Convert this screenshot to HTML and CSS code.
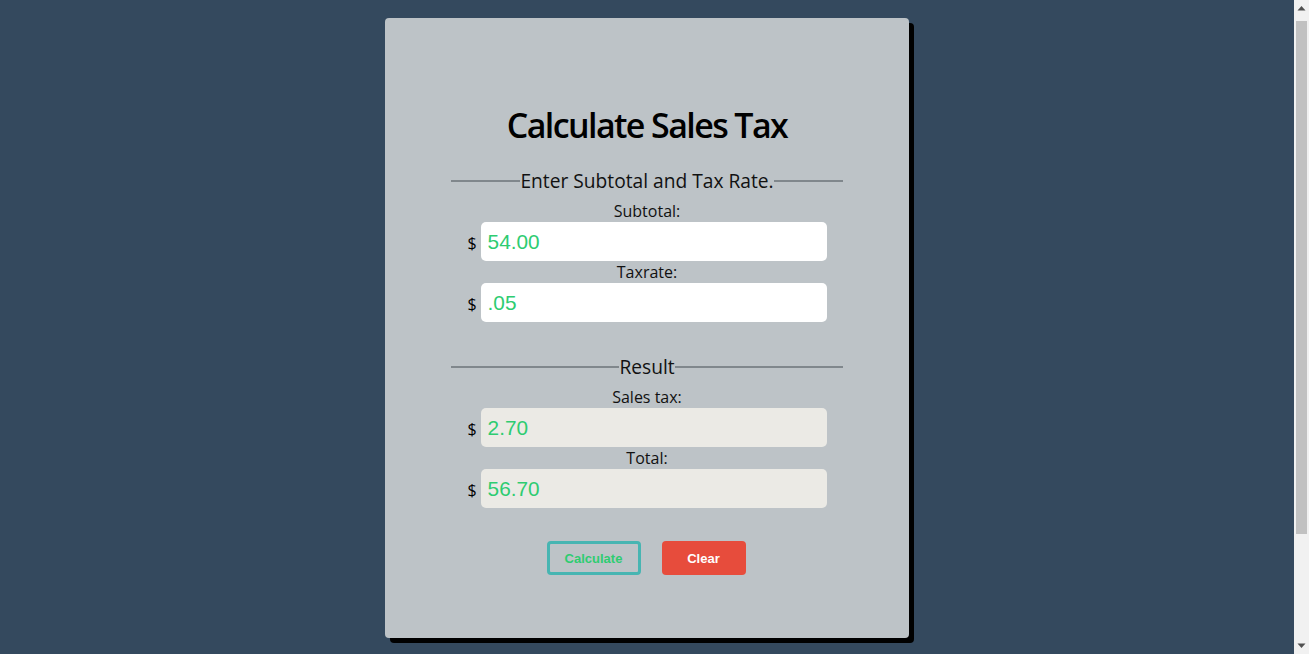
FILE: index.html
```html
<!DOCTYPE html>
<html lang="en">
<head>
<meta charset="utf-8">
<title>Calculate Sales Tax</title>
<link rel="stylesheet" href="styles.css">
</head>
<body>
<div class="page">
  <main class="card">
    <h1 class="title">Calculate Sales Tax</h1>
    <form class="form">
      <section class="group">
        <div class="group-title"><span>Enter Subtotal and Tax Rate.</span></div>
        <label class="label" for="subtotal">Subtotal:</label>
        <div class="row"><span class="cur">$</span><input class="field" id="subtotal" type="text" value="54.00"></div>
        <label class="label" for="taxrate">Taxrate:</label>
        <div class="row"><span class="cur">$</span><input class="field" id="taxrate" type="text" value=".05"></div>
      </section>
      <section class="group group-result">
        <div class="group-title"><span>Result</span></div>
        <label class="label" for="salestax">Sales tax:</label>
        <div class="row"><span class="cur">$</span><input class="field field-ro" id="salestax" type="text" value="2.70" readonly></div>
        <label class="label" for="total">Total:</label>
        <div class="row"><span class="cur">$</span><input class="field field-ro" id="total" type="text" value="56.70" readonly></div>
      </section>
      <div class="actions">
        <button type="button" class="btn btn-calc">Calculate</button>
        <button type="button" class="btn btn-clear">Clear</button>
      </div>
    </form>
  </main>
</div>
<div class="scrollbar" aria-hidden="true">
  <div class="sb-btn"><svg width="15" height="17" viewBox="0 0 15 17"><path d="M3.5 10.5 L7.5 6 L11.5 10.5 Z" fill="#505050"/></svg></div>
  <div class="sb-track"><div class="sb-thumb"></div></div>
  <div class="sb-btn"><svg width="15" height="17" viewBox="0 0 15 17"><path d="M3.5 6.5 L7.5 11 L11.5 6.5 Z" fill="#505050"/></svg></div>
</div>
</body>
</html>
```

FILE: styles.css
```css
html, body {
  margin: 0;
  padding: 0;
}
body {
  background: #34495e;
  font-family: "Open Sans", "Noto Sans", sans-serif;
  color: #111;
  margin-right: 15px;
}
.page {
  padding: 18px 0 152px;
}
.card {
  box-sizing: border-box;
  width: 524px;
  height: 620px;
  margin: 0 auto;
  background: #bdc3c7;
  border-radius: 4px;
  box-shadow: 5px 5px 0 #000;
  padding-top: 83px;
}
.title {
  margin: 0;
  text-align: center;
  font-size: 34px;
  font-weight: 600;
  letter-spacing: -1.6px;
  line-height: 48px;
  color: #000;
}
.form {
  width: 392px;
  margin: 19px auto 0;
}
.group-title {
  display: flex;
  align-items: center;
  font-size: 19.2px;
  line-height: 26px;
  height: 26px;
}
.group-title::before,
.group-title::after {
  content: "";
  flex: 1;
  height: 2px;
  background: #80878c;
}
.group-result {
  margin-top: 32px;
}
.label {
  display: block;
  margin-top: 6px;
  text-align: center;
  font-size: 16px;
  line-height: 22px;
  height: 22px;
}
.row + .label {
  margin-top: 0;
}
.row {
  display: flex;
  align-items: center;
  justify-content: center;
  gap: 4px;
}
.cur {
  font-size: 16px;
  line-height: 20px;
  padding-top: 3px;
  color: #000;
}
.field {
  box-sizing: border-box;
  width: 346px;
  height: 39px;
  border: none;
  border-radius: 5px;
  background: #fff;
  padding: 0 7px;
  font-family: "Liberation Sans", Arial, sans-serif;
  font-size: 20.8px;
  color: #2ecc71;
  outline: none;
}
.field-ro {
  background: #ebeae5;
}
.actions {
  display: flex;
  justify-content: center;
  gap: 21px;
  margin-top: 33px;
  padding-right: 2px;
}
.btn {
  box-sizing: border-box;
  height: 34px;
  font-family: "Liberation Sans", Arial, sans-serif;
  font-size: 13px;
  font-weight: 700;
  border-radius: 4px;
  cursor: pointer;
  padding: 0;
}
.btn-calc {
  width: 94px;
  background: transparent;
  border: 3px solid #47b5b2;
  color: #2ecc71;
}
.btn-clear {
  width: 84px;
  background: #e74c3c;
  border: none;
  color: #fff;
}
.scrollbar {
  position: fixed;
  top: 0;
  right: 0;
  width: 15px;
  height: 100vh;
  background: #f1f1f1;
  display: flex;
  flex-direction: column;
}
.sb-btn {
  height: 17px;
  flex: none;
}
.sb-btn svg {
  display: block;
}
.sb-track {
  flex: 1;
  padding: 4px 2px 0;
}
.sb-thumb {
  height: 513px;
  background: #c1c1c1;
}
```
